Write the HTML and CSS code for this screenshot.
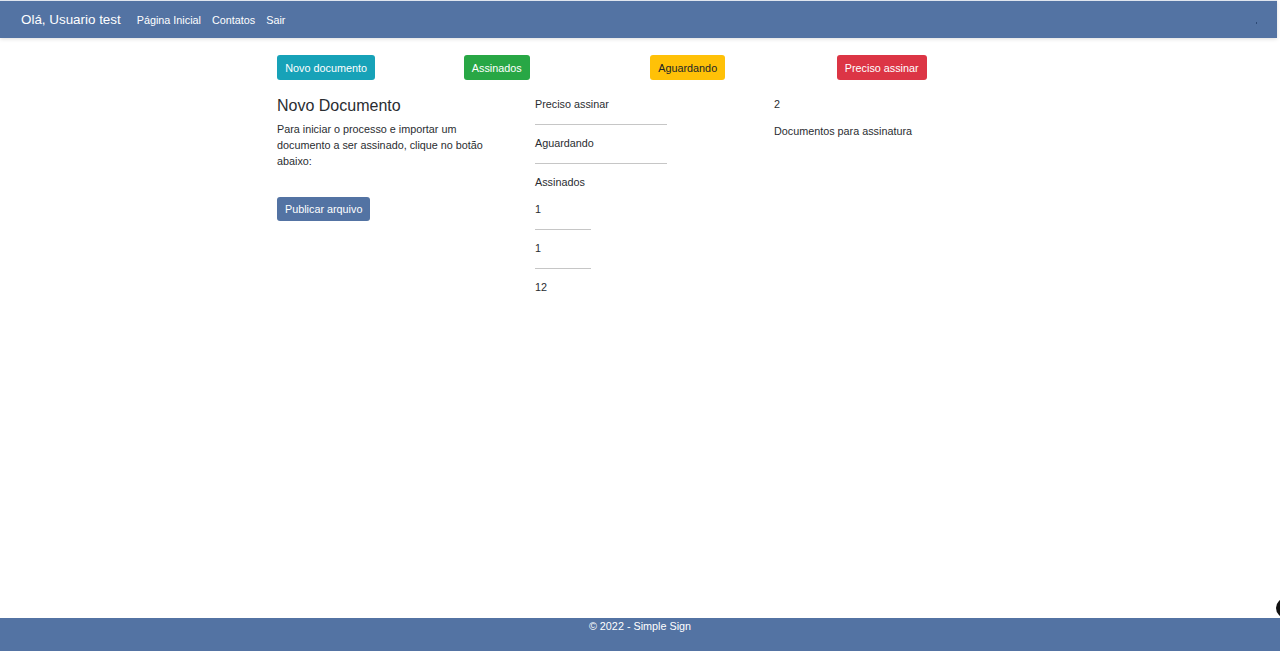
FILE: index.html
```html
<!DOCTYPE html>
<html lang="pt-BR">
<head>
<meta charset="utf-8">
<title>Simple Sign</title>
<link rel="stylesheet" href="styles.css">
</head>
<body>
<header class="navbar">
  <span class="brand">Olá, Usuario test</span>
  <nav class="nav-links">
    <a href="#">Página Inicial</a>
    <a href="#">Contatos</a>
    <a href="#">Sair</a>
  </nav>
  <span class="nav-dot"></span>
</header>
<main class="main">
  <div class="container">
    <div class="btn-row">
      <div class="btn-cell"><button class="btn btn-info">Novo documento</button></div>
      <div class="btn-cell"><button class="btn btn-success">Assinados</button></div>
      <div class="btn-cell"><button class="btn btn-warning">Aguardando</button></div>
      <div class="btn-cell"><button class="btn btn-danger">Preciso assinar</button></div>
    </div>
    <div class="content-row">
      <section class="col-new">
        <h2 class="title">Novo Documento</h2>
        <p class="desc">Para iniciar o processo e importar um documento a ser assinado, clique no botão abaixo:</p>
        <button class="btn btn-primary">Publicar arquivo</button>
      </section>
      <section class="col-stats">
        <div class="line">Preciso assinar</div>
        <hr class="rule rule-long">
        <div class="line">Aguardando</div>
        <hr class="rule rule-long">
        <div class="line">Assinados</div>
        <div class="line">1</div>
        <hr class="rule rule-short">
        <div class="line">1</div>
        <hr class="rule rule-short">
        <div class="line">12</div>
      </section>
      <section class="col-info">
        <div class="line">2</div>
        <div class="line">Documentos para assinatura</div>
      </section>
    </div>
  </div>
</main>
<footer class="footer">© 2022 - Simple Sign</footer>
<span class="corner-dot"></span>
</body>
</html>
```

FILE: styles.css
```css
* { box-sizing: border-box; }

html, body {
  margin: 0;
  padding: 0;
  height: 100%;
}

body {
  font-family: "Liberation Sans", Arial, sans-serif;
  font-size: 11px;
  color: #2a2d31;
  background: #fff;
  display: flex;
  flex-direction: column;
  min-height: 100vh;
  position: relative;
  overflow: hidden;
}

.navbar {
  position: relative;
  display: flex;
  align-items: center;
  height: 38px;
  margin-right: 3px;
  border-top: 1px solid #dfe5ee;
  background: #5373a3;
  padding-left: 21px;
  box-shadow: 0 1px 4px rgba(0, 0, 0, 0.14);
  z-index: 1;
}

.brand {
  color: #fff;
  font-size: 13.4px;
  margin-right: 10.5px;
}

.nav-links {
  display: flex;
}

.nav-links a {
  color: #fff;
  text-decoration: none;
  font-size: 10.8px;
  padding: 0 5.5px;
}

.nav-dot {
  position: absolute;
  left: 1256px;
  top: 21px;
  width: 1px;
  height: 2px;
  background: #2d4a75;
}

.main {
  flex: 1;
}

.container {
  width: 766px;
  margin: 0 auto;
  padding-left: 20px;
  padding-top: 17px;
}

.btn-row {
  display: grid;
  grid-template-columns: repeat(4, 186.5px);
}

.btn {
  font-family: "Liberation Sans", Arial, sans-serif;
  font-size: 10.8px;
  line-height: 16px;
  border: none;
  border-radius: 3px;
  padding: 4.5px 8.3px;
  color: #fff;
  cursor: pointer;
}

.btn-info { background: #17a2b8; }
.btn-success { background: #28a745; }
.btn-warning { background: #ffc107; color: #212529; }
.btn-danger { background: #dc3545; }
.btn-primary {
  background: #5373a3;
  padding: 4px 8px;
}

.content-row {
  display: grid;
  grid-template-columns: 258px 239px 1fr;
  margin-top: 16px;
}

.title {
  margin: 0;
  font-size: 16px;
  line-height: 19px;
  font-weight: 400;
}

.desc {
  margin: 6px 0 28px;
  width: 225px;
  line-height: 16px;
  font-size: 10.8px;
}

.line {
  line-height: 16px;
  font-size: 10.8px;
  margin-bottom: 11px;
}

.rule {
  border: none;
  border-top: 1px solid #c6c6c6;
  margin: 12px 0 10px;
  height: 0;
}

.rule-long { width: 132px; }
.rule-short { width: 56px; }

.footer {
  height: 33px;
  background: #5373a3;
  color: #fff;
  text-align: center;
  font-size: 10.8px;
  line-height: 16px;
}

.corner-dot {
  position: absolute;
  left: 1276px;
  top: 598px;
  width: 20px;
  height: 20px;
  border-radius: 50%;
  background: #111;
}
```
